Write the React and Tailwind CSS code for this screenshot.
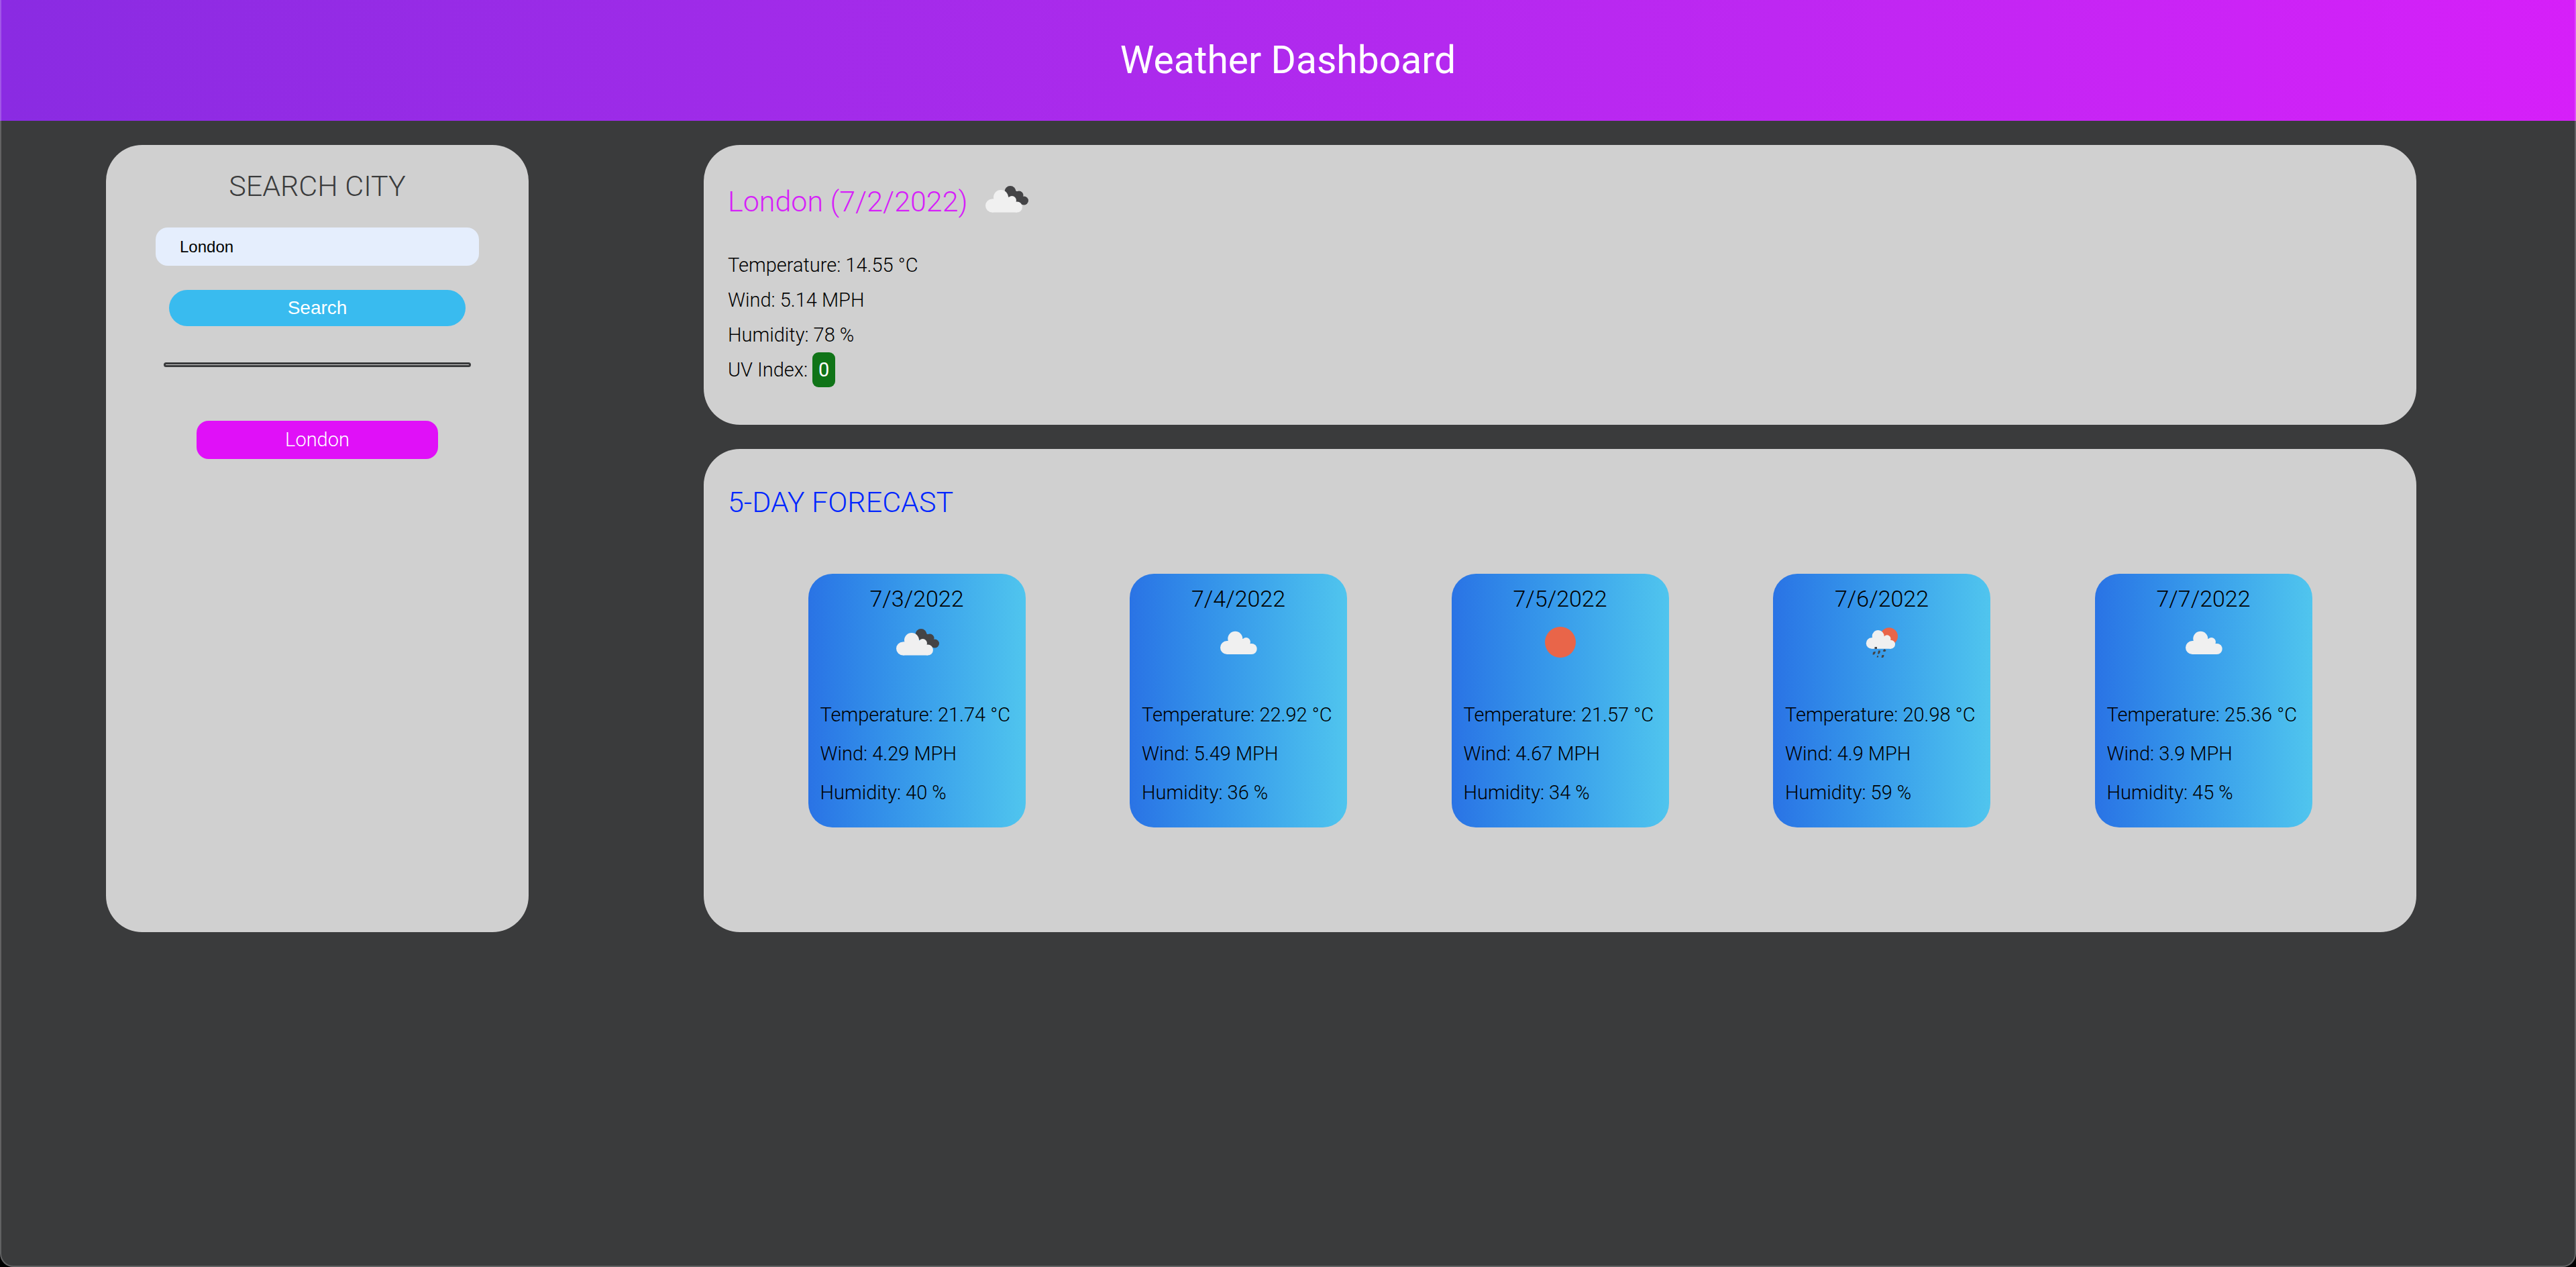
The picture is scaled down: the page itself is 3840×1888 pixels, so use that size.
const CLOUD = "#f0f0f0";
const DARK = "#444446";
const SUN = "#e96549";

function ScatteredClouds() {
  return (
    <g fill={CLOUD}>
      <circle cx="33" cy="58" r="10" />
      <circle cx="45.300" cy="44.700" r="11" />
      <circle cx="61.500" cy="49.500" r="6.500" />
      <circle cx="69.700" cy="60" r="8" />
      <path d="M33 48h2l8-3h14l5 4 7 4v15H33z" />
    </g>
  );
}

function BrokenClouds() {
  return (
    <>
      <g fill={DARK}>
        <circle cx="56" cy="38.500" r="8.500" />
        <circle cx="69" cy="44" r="6.500" />
        <circle cx="76.500" cy="52" r="6.500" />
        <path d="M50 40l12-4 7 4 7 7-2 11-8-3z" />
      </g>
      <g fill={CLOUD}>
        <circle cx="29" cy="59.500" r="10" />
        <circle cx="42" cy="47" r="11" />
        <circle cx="58.500" cy="51.500" r="6.500" />
        <circle cx="66" cy="61.500" r="8" />
        <path d="M29 49.500h2l9-2h14l5 4 7 3v15H29z" />
      </g>
    </>
  );
}

function Rain() {
  return (
    <>
      <circle cx="61" cy="41.300" r="13" fill={SUN} />
      <g fill={CLOUD}>
        <circle cx="35" cy="51.500" r="8.200" />
        <circle cx="44.700" cy="41" r="9" />
        <circle cx="58" cy="44.800" r="5.500" />
        <circle cx="63.500" cy="53.200" r="6.500" />
        <path d="M35 43.300h2l7-2h10l4 3 6 3v12.400H35z" />
      </g>
      <g fill={DARK}>
        <path d="M39.500 57h3.500v3h-3.500z" />
        <path d="M38.500 64h2.500l-1 3-1.500 1.500h-2l.500-3z" />
        <path d="M45 62.500h3l-.5 3-1.500 2h-2z" />
        <path d="M53.500 60.500h1.500l1.500 2-1.500 1.500h-2.500l-.5-1.500z" />
        <path d="M43.500 70h1.500v2.500h-2.500z" />
        <path d="M50.500 69h3l-.5 3-1.500 1h-2z" />
      </g>
    </>
  );
}

function WeatherIcon({ kind, className = "" }) {
  return (
    <svg viewBox="0 0 100 100" className={`size-[100px] shrink-0 ${className}`} role="img" aria-label={kind}>
      {kind === "clear" && <circle cx="50" cy="50" r="23" fill={SUN} />}
      {kind === "scattered clouds" && <ScatteredClouds />}
      {kind === "broken clouds" && <BrokenClouds />}
      {kind === "rain" && <Rain />}
    </svg>
  );
}

const forecast = [
  { date: "7/3/2022", kind: "broken clouds", temp: "21.74", wind: "4.29", humidity: "40" },
  { date: "7/4/2022", kind: "scattered clouds", temp: "22.92", wind: "5.49", humidity: "36" },
  { date: "7/5/2022", kind: "clear", temp: "21.57", wind: "4.67", humidity: "34" },
  { date: "7/6/2022", kind: "rain", temp: "20.98", wind: "4.9", humidity: "59" },
  { date: "7/7/2022", kind: "scattered clouds", temp: "25.36", wind: "3.9", humidity: "45" },
];

function ForecastCard({ day }) {
  return (
    <li className="flex w-[324px] flex-col rounded-[36px] bg-linear-to-r from-[#2a73e5] to-[#50c5ee] px-[18px] pt-[10px] pb-[23px]">
      <h3 className="text-center text-[34px] leading-[54px]">{day.date}</h3>
      <WeatherIcon kind={day.kind} className="-mt-[12px] mb-[29px] self-center" />
      <p>Temperature: {day.temp} °C</p>
      <p>Wind: {day.wind} MPH</p>
      <p>Humidity: {day.humidity} %</p>
    </li>
  );
}

export default function App() {
  return (
    <div className="relative min-h-screen bg-black">
      <div className="min-h-screen rounded-b-[20px] bg-[#3a3b3c] pb-[36px] font-['Roboto',sans-serif] text-[29px] font-light text-black">
        <header className="flex h-[180px] items-center justify-center bg-linear-to-r from-[#8a2be2] to-[#d61ff9]">
          <h1 className="text-[57px] leading-[72px] font-normal text-white">Weather Dashboard</h1>
        </header>
        <div className="flex items-stretch pt-[36px] pr-[238px] pl-[158px]">
          <aside className="mr-[261px] flex w-[630px] shrink-0 flex-col items-center rounded-[54px] bg-[#d0d0d0] pt-[36px]">
            <form className="flex w-full flex-col items-center" onSubmit={(e) => e.preventDefault()}>
              <label htmlFor="city" className="text-[43px] leading-[51px] text-[#3a3b3c]">
                SEARCH CITY
              </label>
              <input
                id="city"
                type="text"
                defaultValue="London"
                className="mt-[36px] h-[57px] w-[482px] rounded-[18px] bg-[#e5eefd] px-[36px] font-['Liberation_Sans',sans-serif] text-[24px] font-normal"
              />
              <button
                type="submit"
                className="mt-[36px] h-[54px] w-[442px] rounded-[27px] bg-[#39bbef] font-['Liberation_Sans',sans-serif] text-[28px] font-normal text-white"
              >
                Search
              </button>
            </form>
            <hr className="mt-[54px] h-[7px] w-[458px] rounded-[4px] border-3 border-[#3a3b3c]" />
            <button type="button" className="mt-[80px] h-[57px] w-[360px] rounded-[18px] bg-[#e010f8] text-white">
              London
            </button>
          </aside>
          <main className="flex min-w-0 grow flex-col gap-[36px]">
            <section className="rounded-[54px] bg-[#d0d0d0] px-[36px] pt-[31px] pb-[56px] leading-[52px]">
              <div className="mb-[22px] flex items-center gap-[7px]">
                <h2 className="pt-[6px] text-[43px] text-[#d61ff9]">London (7/2/2022)</h2>
                <WeatherIcon kind="broken clouds" />
              </div>
              <p>Temperature: 14.55 °C</p>
              <p>Wind: 5.14 MPH</p>
              <p>Humidity: 78 %</p>
              <p>
                UV Index:{" "}
                <span className="inline-block rounded-[9px] bg-[#107418] px-[9px] font-normal text-white">0</span>
              </p>
            </section>
            <section className="rounded-[54px] bg-[#d0d0d0] pt-[53px] pb-[156px]">
              <h2 className="px-[36px] text-[43px] leading-[52px] text-[#0026ff]">5-DAY FORECAST</h2>
              <ul className="mt-[81px] flex justify-evenly leading-[58px]">
                {forecast.map((day) => (
                  <ForecastCard key={day.date} day={day} />
                ))}
              </ul>
            </section>
          </main>
        </div>
      </div>
      <div className="pointer-events-none absolute inset-0 rounded-b-[20px] border-x-2 border-b-2 border-white/20" />
    </div>
  );
}
